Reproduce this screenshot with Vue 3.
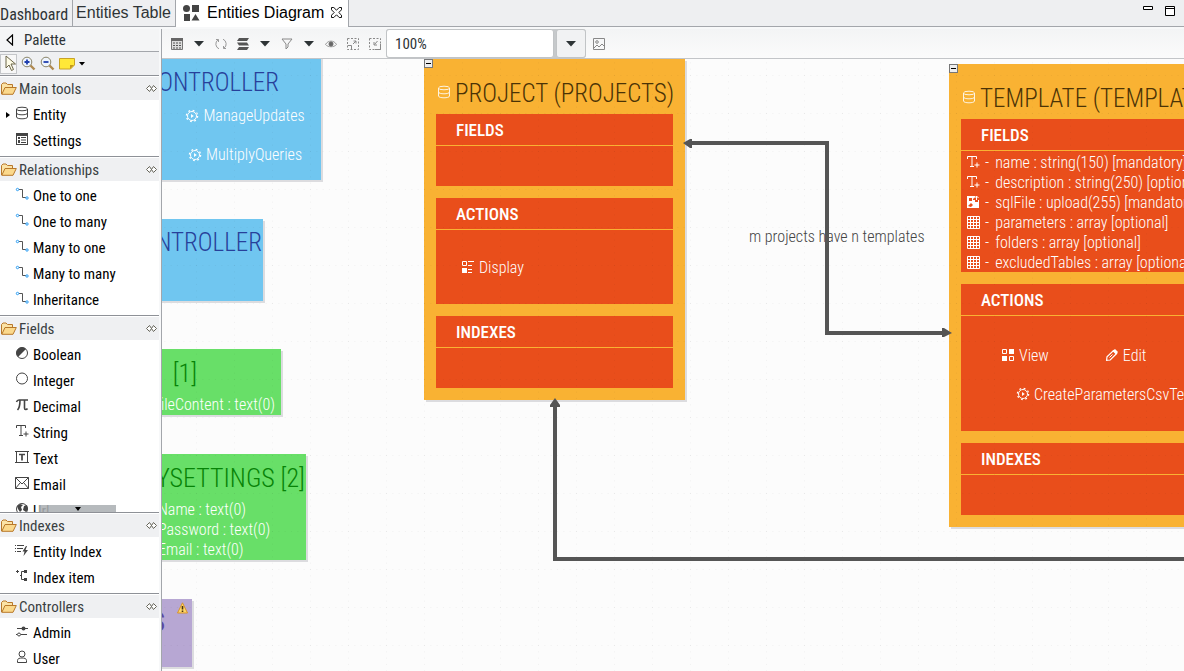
<script setup>
import { ref } from 'vue'

const tabs = ['Dashboard', 'Entities Table']
const zoomLevel = ref('100%')

const groups = [
  { title: 'Main tools', items: [
    { label: 'Entity', icon: 'database', expandable: true },
    { label: 'Settings', icon: 'settings' }
  ] },
  { title: 'Relationships', items: [
    { label: 'One to one', icon: 'link' },
    { label: 'One to many', icon: 'link' },
    { label: 'Many to one', icon: 'link' },
    { label: 'Many to many', icon: 'link' },
    { label: 'Inheritance', icon: 'link' }
  ] },
  { title: 'Fields', scroll: true, items: [
    { label: 'Boolean', icon: 'boolean' },
    { label: 'Integer', icon: 'circle' },
    { label: 'Decimal', icon: 'pi' },
    { label: 'String', icon: 'string' },
    { label: 'Text', icon: 'text' },
    { label: 'Email', icon: 'mail' },
    { label: 'Url', icon: 'globe' }
  ] },
  { title: 'Indexes', items: [
    { label: 'Entity Index', icon: 'entityIndex' },
    { label: 'Index item', icon: 'indexItem' }
  ] },
  { title: 'Controllers', items: [
    { label: 'Admin', icon: 'sliders' },
    { label: 'User', icon: 'user' }
  ] }
]

const icons = {
  database: '<g fill="none" stroke="currentColor" stroke-width="1"><ellipse cx="7" cy="3" rx="5.500" ry="1.800"/><path d="M1.500 3v8c0 2.400 11 2.400 11 0V3M1.500 7c0 2.400 11 2.400 11 0"/></g>',
  settings: '<path fill="currentColor" fill-rule="evenodd" d="M1 1h12v12H1zM2 4v8h10V4zM3 5h2v2H3zM3 8h2v3H3zM6 5h5v1H6zM6 7.500h5v1H6zM6 10h5v1H6z"/>',
  link: '<path fill="none" stroke="#555" d="M4 2.500h3.500v8H11"/><circle cx="2.500" cy="2.500" r="1.200" fill="#fff" stroke="#2a9df4"/><circle cx="12" cy="11" r="1.200" fill="#fff" stroke="#2a9df4"/>',
  boolean: '<circle cx="7" cy="7" r="5.500" fill="none" stroke="currentColor"/><path fill="currentColor" d="M3 11A5.500 5.500 0 0 1 11 3z"/>',
  circle: '<circle cx="7" cy="6.500" r="5.500" fill="none" stroke="currentColor"/>',
  pi: '<path fill="none" stroke="currentColor" stroke-width="1.600" d="M1.500 4C2 2.500 3 2 4 2h9M5 2c0 4-.5 8-2.500 10M9.500 2v8c0 2 2 2 3 .5"/>',
  string: '<path fill="none" stroke="currentColor" d="M1.500 4V1.500h9V4M6 1.500v10M4 11.500h4M11 7.500v5M8.500 10h5"/>',
  text: '<path fill="none" stroke="currentColor" d="M1.500 1.500h11v11h-11zM0 1.500h2M12 1.500h2M0 12.500h2M12 12.500h2"/><path fill="none" stroke="currentColor" stroke-width="1.700" d="M4 4.500h6M7 4.500v6"/>',
  mail: '<path fill="none" stroke="currentColor" d="M.5 1.500h13v11H.5zL7 8l6.500-6.500M.5 12.500 5 7M13.500 12.500 9 7"/>',
  globe: '<circle cx="7" cy="7" r="5.500" fill="none" stroke="currentColor"/><path fill="currentColor" d="M2 4l3-2 3 1-2 2 1 3-2 2-2-3zM9 4l3-1 1 4-2 3-3-2z"/>',
  entityIndex: '<path stroke="currentColor" fill="none" d="M0 2.500h1M2 2.500h7M0 5.500h1M2 5.500h6M0 8.500h1M2 8.500h4"/><path fill="currentColor" d="M11 3 7.500 8.500h2L8.500 13 13 7h-2.500l1.500-4z"/>',
  indexItem: '<path stroke="currentColor" fill="none" d="M1 2.500h3M2.500 1v3M11 2.500H6.500v8H11M6.500 6.500H5"/><path fill="currentColor" d="M9 1h3v3H9zM9 9h3v3H9z"/>',
  sliders: '<path stroke="currentColor" fill="none" d="M2 4.500h11M1 10.500h1M6 10.500h6"/><circle cx="8.500" cy="4.500" r="2" fill="currentColor"/><circle cx="4" cy="10.500" r="1.500" fill="none" stroke="currentColor"/>',
  user: '<circle cx="7" cy="4" r="3" fill="none" stroke="currentColor"/><path fill="none" stroke="currentColor" d="M2.500 12.500v-2c0-2 2-2.500 4.500-2.500s4.500.5 4.500 2.500v2z"/>',
  gear: '<g fill="none" stroke="currentColor"><circle cx="7" cy="7" r="4.500"/><circle cx="7" cy="7" r="5.600" stroke-width="1.300" stroke-dasharray="1.800 2.600"/></g><path fill="currentColor" d="M6 5 8.800 7 6 9z"/>',
  display: '<path fill="none" stroke="currentColor" d="M1.500 1.500h4v4h-4zM7 1.500h6M7 5.500h4M7 9.500h4M7 12.500h4"/><path fill="currentColor" d="M1 8h5v5H1z"/>',
  view: '<path fill="none" stroke="currentColor" d="M1.500 1.500h4v4h-4zM8.500 8.500h4v4h-4z"/><path fill="currentColor" d="M8 1h5v5H8zM1 8h5v5H1z"/>',
  edit: '<path fill="none" stroke="currentColor" stroke-width="1.200" d="M1.600 12.400l.4-3.600 6.500-6.300 3.200 3L5.200 12z"/><path fill="currentColor" d="M7.500 3 10 1l3 3-2 2.500z"/><path stroke="currentColor" d="M4.500 9.500l3-3"/>',
  remove: '<path stroke="currentColor" stroke-width="2" fill="none" d="M1 7h12"/>',
  upload: '<path fill="currentColor" fill-rule="evenodd" d="M1 1h8v1L7 4v1h2v2h3V5h1v8H1zM3 3v3h3V3zM2 11l3-3 2 2-2 2z"/><path stroke="currentColor" fill="none" d="M10.500 5V1M8.500 3l2-2 2 2"/>',
  grid: '<path fill="none" stroke="currentColor" d="M1.500 1.500h12v12h-12zM1.500 4.500h12M1.500 7.500h12M1.500 10.500h12M4.500 1.500v12M7.500 1.500v12M10.500 1.500v12"/>'
}

const cards = [
  {
    cls: 'project', title: 'PROJECT (PROJECTS)', fields: [],
    actions: [[{ label: 'Display', icon: 'display' }]]
  },
  {
    cls: 'template', title: 'TEMPLATE (TEMPLATES)',
    fields: [
      { text: 'name : string(150) [mandatory]', icon: 'string' },
      { text: 'description : string(250) [optional]', icon: 'string' },
      { text: 'sqlFile : upload(255) [mandatory]', icon: 'upload' },
      { text: 'parameters : array [optional]', icon: 'grid' },
      { text: 'folders : array [optional]', icon: 'grid' },
      { text: 'excludedTables : array [optional]', icon: 'grid' }
    ],
    actions: [
      [{ label: 'View', icon: 'view' }, { label: 'Edit', icon: 'edit' }, { label: 'Delete', icon: 'remove' }],
      [{ label: 'CreateParametersCsvTemplate', icon: 'gear' }]
    ]
  }
]
</script>

<template>
  <div class="app">
    <header class="tabbar">
      <button v-for="(t, i) in tabs" :key="t" class="tab" :class="{ narrow: i === 0 }">{{ t }}</button>
      <button class="tab active">
        <svg width="17" height="16" viewBox="0 0 17 16" fill="#444"><circle cx="3.500" cy="3.500" r="3.500"/><path d="M9 0h7v7H9zM1 9h6v7H1zM12.500 9 16.500 15.500h-8z"/></svg>
        <span>Entities Diagram</span>
        <svg width="11" height="11" viewBox="0 0 11 11" fill="#fff" stroke="#111"><path d="M.5.5h2.300l2.700 2.700L8.200.5h2.300v2.300L7.800 5.500l2.700 2.700v2.300H8.200L5.500 7.800l-2.700 2.700H.5V8.200l2.700-2.700L.5 2.800z"/></svg>
      </button>
      <div class="winbtns">
        <button aria-label="Minimize"><svg width="10" height="12" viewBox="0 0 10 12"><path d="M.5 2.500h9v3h-9z" fill="#fff" stroke="#000"/></svg></button>
        <button aria-label="Maximize"><svg width="10" height="12" viewBox="0 0 10 12"><path d="M.5 2.500h9v9h-9zM.5 4.500h9" fill="#fff" stroke="#000"/></svg></button>
      </div>
    </header>

    <div class="body">
      <aside class="palette">
        <div class="palette-head">
          <svg width="8" height="12" viewBox="0 0 8 12"><path d="M6.500 1v10L1 6z" fill="#fff" stroke="#000" stroke-width="1.200"/></svg>
          <span>Palette</span>
        </div>
        <div class="palette-tools">
          <button class="pressed" aria-label="Select">
            <svg width="12" height="17" viewBox="0 0 12 17"><path d="M1 1v12l3-3 2.500 5.500 2-1L6 9h4.500z" fill="#fffde8" stroke="#6b6448"/></svg>
          </button>
          <button aria-label="Zoom in">
            <svg width="15" height="15" viewBox="0 0 15 15"><path d="M9 9l4.500 4.500" stroke="#b08a50" stroke-width="2.400"/><circle cx="6" cy="6" r="4.800" fill="#eef4fc" stroke="#8a8468"/><path d="M3.500 6h5M6 3.500v5" stroke="#1f3fae" stroke-width="1.800"/></svg>
          </button>
          <button aria-label="Zoom out">
            <svg width="15" height="15" viewBox="0 0 15 15"><path d="M9 9l4.500 4.500" stroke="#b08a50" stroke-width="2.400"/><circle cx="6" cy="6" r="4.800" fill="#eef4fc" stroke="#8a8468"/><path d="M3.500 6h5" stroke="#1f3fae" stroke-width="1.800"/></svg>
          </button>
          <button class="note" aria-label="Note">
            <svg width="16" height="12" viewBox="0 0 16 12"><path d="M.5.500h15V7l-4 4H.5z" fill="#ffe838" stroke="#c9a227"/><path d="M15 7h-4v4z" fill="#c49a1c"/></svg>
            <svg width="6" height="4" viewBox="0 0 6 4"><path d="M0 0h6L3 3.500z" fill="#000"/></svg>
          </button>
        </div>

        <section v-for="g in groups" :key="g.title" class="group" :class="{ scroll: g.scroll }">
          <h2>
            <svg width="16" height="13" viewBox="0 0 16 13"><path d="M.5 12V2.500L2 1h3l1.500 1.500h5V5" fill="#fbe3a6" stroke="#b8782a"/><path d="M.8 12.300 4 5.500h11.300L12 12.300z" fill="#fbd98c" stroke="#b8782a"/></svg>
            <span>{{ g.title }}</span>
            <svg class="pin" width="11" height="7" viewBox="0 0 11 7" fill="#fff" stroke="#66655a"><path d="M3.500.5.500 3.500l3 3 2-3zM7.500.5l-2 3 2 3 3-3z"/></svg>
          </h2>
          <ul>
            <li v-for="it in g.items" :key="it.label">
              <button>
                <svg v-if="it.expandable" class="arrow" width="4" height="6" viewBox="0 0 4 6"><path d="M0 0l4 3-4 3z"/></svg>
                <svg class="ico" width="14" height="14" viewBox="0 0 14 14" v-html="icons[it.icon]"></svg>
                <span>{{ it.label }}</span>
              </button>
            </li>
          </ul>
          <button v-if="g.scroll" class="more" aria-label="Scroll down">
            <svg width="6" height="4" viewBox="0 0 6 4"><path d="M0 0h6L3 4z"/></svg>
          </button>
        </section>
      </aside>

      <main class="editor">
        <div class="toolbar">
          <button aria-label="Table"><svg width="12" height="12" viewBox="0 0 12 12"><path d="M.5.500h11v11H.5z" fill="#ddd" stroke="#777"/><path d="M0 0h12v3H0z" fill="#666"/><path d="M2 5h2M5 5h2M8 5h2M2 7.500h2M5 7.500h2M8 7.500h2M2 10h2M5 10h2M8 10h2" stroke="#555"/></svg></button>
          <button aria-label="Table options"><svg class="caret" width="10" height="6" viewBox="0 0 10 6"><path d="M0 0h10L5 5.500z"/></svg></button>
          <button aria-label="Refresh"><svg width="12" height="12" viewBox="0 0 12 12" fill="none" stroke="#999"><path d="M4 10.800A5.200 5.200 0 0 1 3 1.800M1 1.500h2.500V4M8 1.200a5.200 5.200 0 0 1 1 9M11 10.500H8.500V8"/></svg></button>
          <button aria-label="Layers"><svg width="12" height="12" viewBox="0 0 12 12" fill="#555"><path d="M2 0h10l-2 3H0zM0 4.500h10l2 3H2zM2 9h10l-2 3H0z"/></svg></button>
          <button aria-label="Layer options"><svg class="caret" width="10" height="6" viewBox="0 0 10 6"><path d="M0 0h10L5 5.500z"/></svg></button>
          <button aria-label="Filter"><svg width="12" height="12" viewBox="0 0 12 12" fill="none" stroke="#888"><path d="M1 1h10L7 6v3l-2 2V6z"/></svg></button>
          <button aria-label="Filter options"><svg class="caret" width="10" height="6" viewBox="0 0 10 6"><path d="M0 0h10L5 5.500z"/></svg></button>
          <button aria-label="Visibility"><svg width="12" height="12" viewBox="0 0 12 12" fill="none" stroke="#999"><path d="M.5 6.500C3 2 9 2 11.500 6.500 9 9.500 3 9.500.5 6.500z"/><circle cx="6" cy="6" r="2" fill="#666" stroke="#666"/></svg></button>
          <button aria-label="Expand"><svg width="12" height="12" viewBox="0 0 12 12" fill="none" stroke="#888"><path d="M.5.500h11v11H.5z" stroke-dasharray="2 1.500"/><path d="M1 7.500h3.500V11M6 6l3-3M6.500 3H9v2.500"/></svg></button>
          <button aria-label="Shrink"><svg width="12" height="12" viewBox="0 0 12 12" fill="none" stroke="#888"><path d="M.5.500h11v11H.5z" stroke-dasharray="2 1.500"/><path d="M11.500 6v5.500H6M8.500 3l-3 3.500M5 4v3h3"/></svg></button>
          <div class="combo">
            <input v-model="zoomLevel" type="text" aria-label="Zoom level">
            <button aria-label="Choose zoom level"><svg class="caret" width="10" height="6" viewBox="0 0 10 6"><path d="M0 0h10L5 5.500z"/></svg></button>
          </div>
          <button aria-label="Export image"><svg width="12" height="12" viewBox="0 0 12 12" fill="none" stroke="#888"><path d="M.5.500h11v11H.5zM1 10l3-3 2 2 3-3 2 2"/><circle cx="4" cy="4" r="1.300"/></svg></button>
        </div>

        <div class="canvas">
          <article class="mini blue ctrl-a">
            <h3>CONTROLLER</h3>
            <ul>
              <li><svg width="14" height="14" viewBox="0 0 14 14" v-html="icons.gear"></svg>ManageUpdates</li>
              <li><svg width="14" height="14" viewBox="0 0 14 14" v-html="icons.gear"></svg>MultiplyQueries</li>
            </ul>
          </article>
          <article class="mini blue ctrl-b"><h3>CONTROLLER</h3></article>
          <article class="mini green file"><h3>[1]</h3><p>fileContent : text(0)</p></article>
          <article class="mini green settings">
            <h3>YSETTINGS [2]</h3>
            <div><p>Name : text(0)</p><p>Password : text(0)</p><p>Email : text(0)</p></div>
          </article>
          <article class="mini purple">
            <h3>S</h3>
            <svg class="warn" width="11" height="12" viewBox="0 0 11 12"><path d="M5.500.8 10.500 11H.5z" fill="#ffd76a" stroke="#d6922c" stroke-linejoin="round"/><path d="M5.500 4v3.500M5.500 8.500V10" stroke="#443010" stroke-width="1.600"/></svg>
          </article>

          <article v-for="c in cards" :key="c.cls" class="entity" :class="c.cls">
            <button class="collapse" aria-label="Collapse"></button>
            <h3><svg width="14" height="14" viewBox="0 0 14 14" v-html="icons.database"></svg><span>{{ c.title }}</span></h3>
            <section>
              <h4>FIELDS</h4>
              <ul class="fields" :class="{ empty: !c.fields.length }">
                <li v-for="f in c.fields" :key="f.text"><svg width="14" height="14" viewBox="0 0 14 14" v-html="icons[f.icon]"></svg><span>-</span>{{ f.text }}</li>
              </ul>
            </section>
            <section>
              <h4>ACTIONS</h4>
              <div class="actions">
                <div v-for="(row, i) in c.actions" :key="i" class="row">
                  <span v-for="a in row" :key="a.label"><svg width="14" height="14" viewBox="0 0 14 14" v-html="icons[a.icon]"></svg>{{ a.label }}</span>
                </div>
              </div>
            </section>
            <section>
              <h4>INDEXES</h4>
              <div class="empty"></div>
            </section>
          </article>

          <div class="relation">m projects have n templates</div>
          <svg class="overlay" width="100%" height="100%">
            <defs>
              <pattern id="dots" width="38" height="38" patternUnits="userSpaceOnUse" x="34" y="16">
                <path d="M0 .5h38M.5 0v38" stroke="#000" stroke-opacity=".04" stroke-dasharray="1 5.333"/>
              </pattern>
            </defs>
            <rect width="100%" height="100%" fill="url(#dots)"/>
            <g fill="none" stroke="#555" stroke-width="4">
              <path d="M527 84H665V274H784"/>
              <path d="M393 346V500H4000"/>
            </g>
            <path fill="#555" d="M521 84l7-4h2v9h-2zM790 274l-8-5h-2v9h2zM393 339l5 7v2h-10v-2z"/>
          </svg>
        </div>
      </main>
    </div>
  </div>
</template>

<style>
html, body, #app { height: 100%; }
body { margin: 0; overflow: hidden; }
</style>

<style scoped>
* { box-sizing: border-box; }
h2, h3, h4, ul, p { margin: 0; padding: 0; list-style: none; font-weight: inherit; }
button { font: inherit; color: inherit; background: none; border: 0; padding: 0; margin: 0; }
svg { display: block; flex: none; }
.app { height: 100vh; display: flex; flex-direction: column; background: #f7f8f9; font-family: 'Roboto Condensed', 'Liberation Sans', sans-serif; font-size: 16px; color: #000; overflow: hidden; }

.tabbar { display: flex; height: 27px; flex: none; background: #eeeff1; border-bottom: 1px solid #a3a6ab; font-family: 'Liberation Sans', sans-serif; }
.tab { height: 26px; padding: 0 4px 0 3px; border-right: 1px solid #a3a6ab; color: #2e3436; }
.tab.narrow { font-family: 'Roboto Condensed', 'Liberation Sans', sans-serif; padding: 2px 4px 0 0; }
.tab.active { display: flex; align-items: center; height: 27px; background: #fff; padding: 0 6px 2px 7px; color: #000; }
.tab.active span { margin: 0 7px; }
.winbtns { margin-left: auto; display: flex; gap: 12px; padding: 4px 9px 0 0; align-items: flex-start; }

.body { flex: 1; min-height: 0; display: flex; padding-top: 2px; }
.palette { width: 162px; flex: none; padding-right: 2px; border-right: 1px solid #a3a6ab; background: #f7f8f9; display: flex; flex-direction: column; overflow: hidden; }
.palette-head { display: flex; align-items: center; gap: 10px; height: 23px; flex: none; padding-left: 6px; border-bottom: 1px solid #a3a6ab; background: #f4f5f6; font-size: 15px; color: #2e3436; }
.palette-tools { display: flex; height: 23px; flex: none; background: #eff0f2; gap: 4px; align-items: center; }
.palette-tools button { display: flex; align-items: center; }
.palette-tools .pressed { width: 17px; height: 20px; padding-left: 4px; border: 1px solid #c4c6c9; background: #f7f7f7; }
.palette-tools .note { gap: 4px; }

.group { flex: none; border-top: 1px solid #8e9197; padding: 1px 0 2px; position: relative; background: #fff; }
.group h2 { display: flex; align-items: center; gap: 2px; height: 23px; background: #eff0f2; font-size: 15px; line-height: 20px; color: #3a3f42; padding: 0 2px 0 1px; margin-bottom: 2px; }
.pin { margin-left: auto; }
.group.scroll { height: 197px; overflow: hidden; padding-bottom: 0; }
.group li button { position: relative; display: flex; gap: 4px; width: 100%; height: 26px; padding-left: 15px; font-size: 15px; line-height: 26px; text-align: left; }
.group li svg.ico { margin-top: 4px; color: #444; }
.group li svg.arrow { position: absolute; left: 6px; top: 10px; }
.more { position: absolute; left: 39px; bottom: 0; width: 77px; height: 7px; background: rgba(172, 176, 180, .88); display: flex; justify-content: center; padding-top: 2px; }

.editor { flex: 1; min-width: 0; display: flex; flex-direction: column; }
.toolbar { display: flex; align-items: center; height: 30px; flex: none; padding-left: 4px; background: linear-gradient(#f3f4f5, #fbfbfb); border-bottom: 1px solid #c3c5c8; }
.toolbar > button { width: 22px; height: 22px; display: flex; align-items: center; justify-content: center; }
.caret { fill: #2e3436; }
.combo { display: flex; width: 200px; height: 29px; margin-right: 2px; background: #c6c9cb; border-radius: 3px; }
.combo input { flex: 1; margin-right: 2px; min-width: 0; border: 1px solid #c1c4c6; border-radius: 3px; background: #fff; padding: 0 8px; font: 15px 'Roboto Condensed', sans-serif; color: #2e3436; }
.combo button { width: 30px; border: 1px solid #c1c4c6; border-radius: 3px; background: #f1f2f3; display: flex; align-items: center; justify-content: center; }

.canvas { flex: 1; position: relative; overflow: hidden; background: #fcfcfc; }
.canvas article { position: absolute; box-shadow: 2px 2px 0 #dcdcdf; }
.canvas h3 { font-size: 25px; font-weight: 300; white-space: nowrap; line-height: 32px; }
.mini { color: #fff; font-weight: 300; display: flex; flex-direction: column; align-items: flex-end; line-height: 20px; white-space: nowrap; }
.blue { background: #70c6f0; }
.canvas .blue h3 { color: #27409a; }
.green { background: #68df68; }
.canvas .green h3 { color: #078307; font-size: 26px; }
.ctrl-a { left: -90px; top: -14px; width: 249px; height: 135px; padding: 22px 0 0; }
.ctrl-a h3 { padding-right: 42px; }
.ctrl-a ul { padding-top: 7px; width: 152px; display: grid; row-gap: 19px; justify-items: center; }
.ctrl-a li { display: flex; align-items: center; gap: 4px; }
.ctrl-b { left: -90px; top: 160px; width: 191px; height: 82px; padding: 8px 1px 0; }
.file { left: -90px; top: 290px; width: 209px; height: 66px; padding: 8px 6px 0; }
.file h3 { padding-right: 78px; }
.file p { margin-top: 6px; }
.settings { left: -90px; top: 395px; width: 234px; height: 106px; padding: 8px 1px 0; }
.settings div { width: 147px; padding-top: 6px; }
.purple { left: -90px; top: 540px; width: 120px; height: 68px; background: #b7a7d3; padding: 8px 27px 0; }
.canvas .purple h3 { color: #5b469e; font-weight: 400; }
.warn { position: absolute; right: 4px; top: 3px; }

.entity { background: #f9b233; padding: 0 12px 12px; }
.entity.project { left: 262px; top: 0; width: 261px; }
.entity.template { left: 787px; top: 5px; width: 460px; }
.entity h3 { height: 55px; display: flex; align-items: center; padding: 15px 0 0 1px; color: #4b3306; gap: 4px; }
.entity h3 svg { color: #fff; margin-bottom: 5px; opacity: .85; }
.entity section { background: #e94e1b; color: #fff; font-weight: 300; overflow: hidden; }
.entity section + section { margin-top: 12px; }
.entity h4 { height: 32px; line-height: 32px; padding-left: 20px; border-bottom: 1px solid #f9b233; font-weight: 500; font-size: 17px; }
.empty { height: 40px; }
.fields { padding: 1px 0 0 5px; }
.fields li { display: flex; align-items: center; height: 20px; white-space: nowrap; }
.fields li span { margin: 0 6px 0 5px; }
.actions { display: grid; row-gap: 19px; padding: 27px 25px; }
.actions .row { display: flex; gap: 56px; height: 20px; align-items: center; white-space: nowrap; }
.actions .row > span { display: flex; align-items: center; gap: 4px; }
.template .actions { padding: 29px 25px 27px 40px; }
.template .row + .row { padding-left: 15px; }
.collapse { position: absolute; left: 0; top: 0; width: 9px; height: 9px; border: 1px solid #777; background: linear-gradient(#000, #000) center / 5px 1px no-repeat #eee; }
.relation { position: absolute; left: 587px; top: 168px; line-height: 20px; font-weight: 300; color: #444; white-space: nowrap; }
.overlay { position: absolute; inset: 0; pointer-events: none; }
</style>
